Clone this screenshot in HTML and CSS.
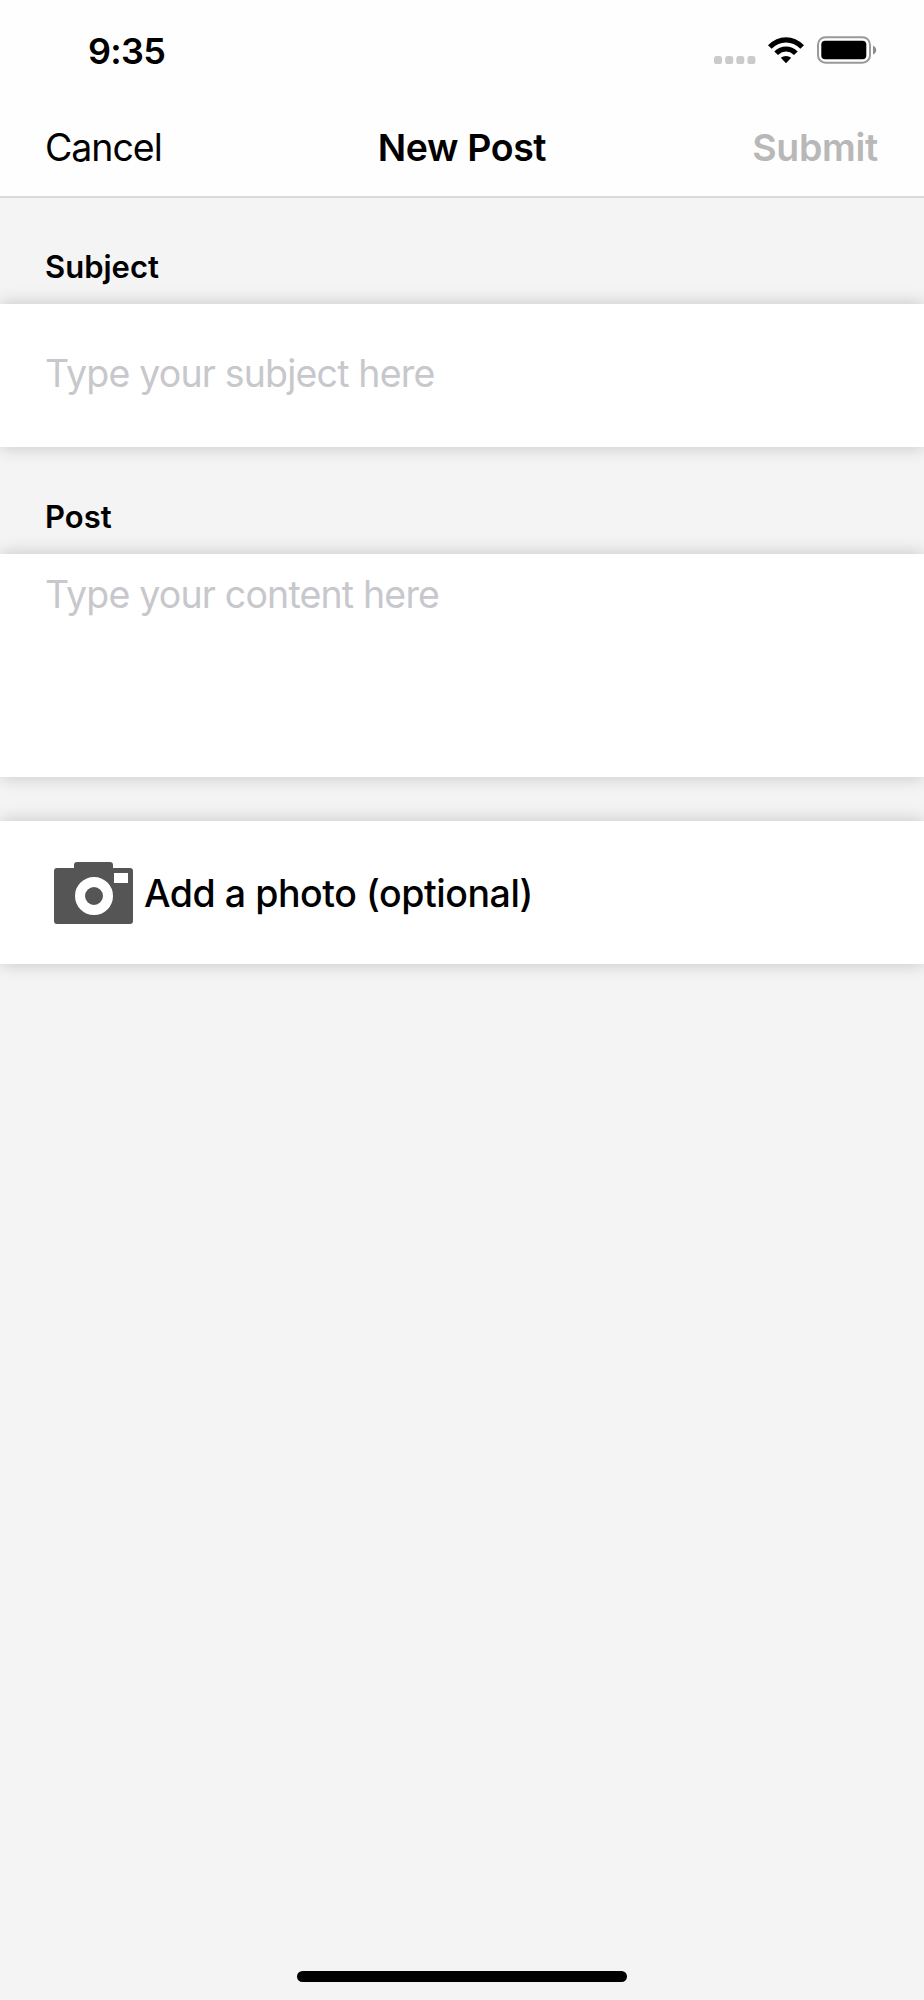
FILE: index.html
```html
<!DOCTYPE html>
<html lang="en">
<head>
<meta charset="utf-8">
<title>New Post</title>
<link rel="stylesheet" href="styles.css">
</head>
<body>
<div class="screen">
  <header class="top">
    <div class="status">
      <span class="time">9:35</span>
      <div class="indicators">
        <svg class="dots" width="42" height="8" viewBox="0 0 42 8" fill="#cbcbcb"><rect width="8" height="8" rx="2.6"/><rect x="11.2" width="8" height="8" rx="2.6"/><rect x="22.3" width="8" height="8" rx="2.6"/><rect x="33.4" width="8" height="8" rx="2.6"/></svg>
        <svg class="wifi" width="38" height="28" viewBox="0 0 38 28"><path d="M1 9.2Q9 1.2 19 1.2T37 9.2L33.4 12.7Q26.800 6.500 19 6.500T4.600 12.700ZM7.300 15.500Q12.400 10.500 19 10.500T30.700 15.500L27 19Q23.300 15.600 19 15.600T11 19ZM13.800 21.700Q16 19.900 19 19.900T24.200 21.700L19 27.200Z"/></svg>
        <svg class="battery" width="60" height="28" viewBox="0 0 60 28"><rect x="1" y="1.200" width="52" height="25.500" rx="7.500" fill="none" stroke="#999" stroke-width="2"/><rect x="4.300" y="4.700" width="45" height="18.500" rx="3.800"/><path d="M56 9.400Q59.200 11 59.200 14T56 18.600Z" fill="#8c8c8c"/></svg>
      </div>
    </div>
    <nav class="nav">
      <span class="cancel">Cancel</span>
      <h1 class="title">New Post</h1>
      <span class="submit">Submit</span>
    </nav>
  </header>
  <main class="form">
    <h2 class="label">Subject</h2>
    <div class="card subject"><span class="hint">Type your subject here</span></div>
    <h2 class="label">Post</h2>
    <div class="card content"><span class="hint">Type your content here</span></div>
    <div class="card photo">
      <svg class="camera" width="80" height="64" viewBox="0 0 80 64"><path fill="#555" d="M3 7H20V4Q20 1 23 1H56Q59 1 59 4V7H76Q79 7 79 10V60Q79 63 76 63H3Q0 63 0 60V10Q0 7 3 7Z"/><path fill="#fff" d="M60 12H74V22H60Z"/><circle cx="40" cy="35" r="14" fill="none" stroke="#fff" stroke-width="10"/></svg>
      <span class="photo-text">Add a photo (optional)</span>
    </div>
  </main>
  <div class="home"></div>
</div>
</body>
</html>
```
FILE: styles.css
```css
* { box-sizing: border-box; }
body { margin: 0; font-family: Inter, "Liberation Sans", sans-serif; color: #000; }
.screen { width: 924px; height: 2000px; display: flex; flex-direction: column; align-items: center; background: #f4f4f4; overflow: hidden; }
.top { width: 100%; height: 198px; background: #fefefe; border-bottom: 2px solid #d9d9d9; }
.status { height: 100px; display: flex; justify-content: space-between; padding: 0 47px 0 88px; }
.time { margin-top: 29px; font-size: 36px; line-height: 44px; font-weight: 600; letter-spacing: -0.7px; }
.indicators { display: flex; align-items: flex-start; }
.dots { margin: 56px 11px 0 0; }
.wifi { margin: 36px 12px 0 0; }
.battery { margin-top: 36px; }
.nav { height: 96px; display: grid; grid-template-columns: 1fr auto 1fr; align-items: center; padding: 0 45px; font-size: 37.5px; line-height: 46px; white-space: nowrap; }
.cancel { letter-spacing: -1.05px; }
.title { margin: 0; font-size: 37.5px; font-weight: 600; letter-spacing: -0.4px; }
.submit { justify-self: end; margin-right: 1px; font-weight: 600; color: #b8b8b8; letter-spacing: -0.3px; }
.form { width: 100%; }
.label { margin: 0; height: 106px; padding: 50px 45px 0; font-size: 31px; line-height: 38px; font-weight: 600; }
.card { display: flex; align-items: center; padding: 0 45px; background: #fff; box-shadow: 0 0 17px rgba(0, 0, 0, 0.2); white-space: nowrap; }
.subject { height: 143px; padding-bottom: 3px; }
.card + .label { height: 107px; padding-top: 51px; }
.content { height: 223px; align-items: flex-start; padding-top: 18px; }
.hint { font-size: 37.5px; line-height: 46px; color: #c7c7cc; letter-spacing: -0.82px; }
.photo { height: 143px; margin-top: 44px; padding-left: 54px; }
.camera { flex: none; }
.photo-text { margin: 2px 0 0 10px; font-size: 37.5px; line-height: 46px; font-weight: 500; letter-spacing: -0.45px; }
.home { width: 330px; height: 11px; margin: auto 0 18px; border-radius: 6px; background: #000; }
```
